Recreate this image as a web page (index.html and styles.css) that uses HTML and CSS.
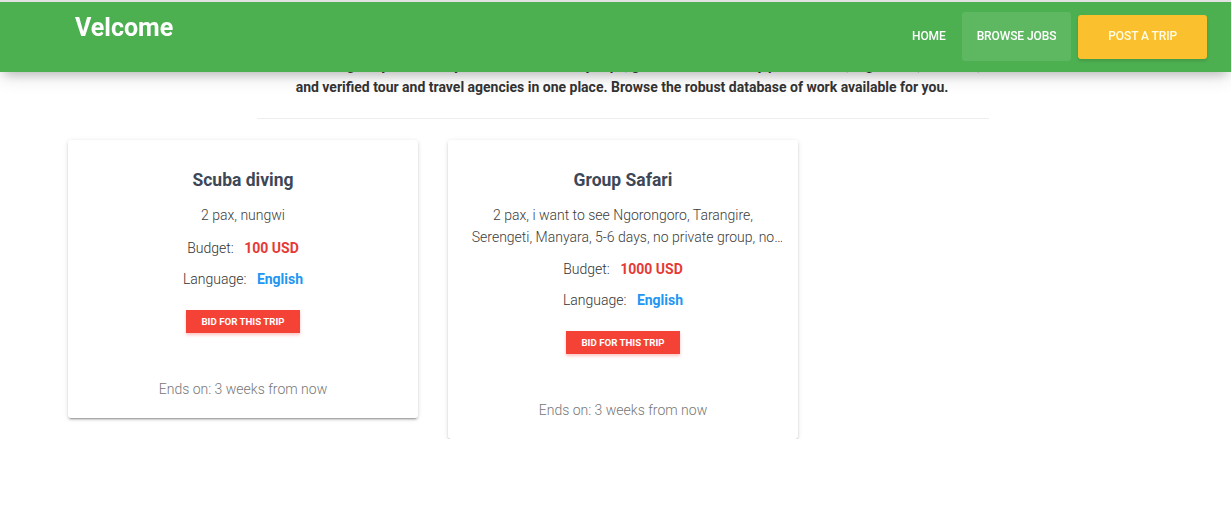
FILE: index.html
```html
<!DOCTYPE html>
<html lang="en">
<head>
<meta charset="utf-8">
<title>Velcome</title>
<link rel="stylesheet" href="styles.css">
</head>
<body>
<header class="topbar">
  <div class="brand">Velcome</div>
  <nav class="nav">
    <a class="nav-link" href="#">Home</a>
    <a class="nav-link nav-active" href="#">Browse Jobs</a>
    <a class="nav-cta" href="#">Post a Trip</a>
  </nav>
</header>
<main class="page">
  <p class="intro">Velcome brings to you a variety of safari and holiday trips, get offers from many professional, registered, licensed,<br>and verified tour and travel agencies in one place. Browse the robust database of work available for you.</p>
  <hr class="divider">
  <section class="cards">
    <article class="card">
      <h3 class="card-title">Scuba diving</h3>
      <p class="card-desc">2 pax, nungwi</p>
      <p class="card-row">Budget: <span class="budget">100 USD</span></p>
      <p class="card-row">Language: <span class="lang">English</span></p>
      <a class="bid" href="#">Bid for this trip</a>
      <p class="ends">Ends on: 3 weeks from now</p>
    </article>
    <article class="card">
      <h3 class="card-title">Group Safari</h3>
      <p class="card-desc">2 pax, i want to see Ngorongoro, Tarangire, Serengeti, Manyara, 5-6 days, no private group, no budget camping, mid range lodges preferred</p>
      <p class="card-row">Budget: <span class="budget">1000 USD</span></p>
      <p class="card-row">Language: <span class="lang">English</span></p>
      <a class="bid" href="#">Bid for this trip</a>
      <p class="ends">Ends on: 3 weeks from now</p>
    </article>
  </section>
</main>
</body>
</html>
```
FILE: styles.css
```css
html, body {
  margin: 0;
  padding: 0;
  background: #fff;
  font-family: Roboto, "Liberation Sans", Arial, sans-serif;
}

.topbar {
  position: fixed;
  top: 0;
  left: 0;
  right: 0;
  z-index: 10;
  height: 70px;
  border-top: 2px solid #e2e2e2;
  background: #4caf50;
  display: flex;
  align-items: center;
  justify-content: space-between;
  padding: 0 24px 0 75px;
  box-shadow: 0 4px 18px 0 rgba(0, 0, 0, 0.14), 0 7px 10px -5px rgba(0, 0, 0, 0.2);
}

.brand {
  align-self: flex-start;
  margin-top: 11px;
  color: #fff;
  font-size: 25px;
  line-height: 30px;
  font-weight: 700;
}

.nav {
  display: flex;
  align-items: center;
  margin-top: -1px;
}

.nav-link {
  display: block;
  padding: 0 15px;
  height: 49px;
  line-height: 49px;
  color: #fff;
  text-decoration: none;
  text-transform: uppercase;
  font-size: 12px;
  font-weight: 500;
  letter-spacing: -0.1px;
  border-radius: 3px;
}

.nav-active {
  margin-left: 1px;
  background: rgba(255, 255, 255, 0.1);
}

.nav-cta {
  display: block;
  margin-left: 7px;
  padding: 0 30px;
  height: 44px;
  line-height: 42px;
  background: #fbc02d;
  color: #fffde7;
  text-decoration: none;
  text-transform: uppercase;
  font-size: 12px;
  font-weight: 500;
  letter-spacing: -0.1px;
  border-radius: 3px;
  box-shadow: 0 2px 3px rgba(0, 0, 0, 0.12);
}

.page {
  padding-top: 54px;
}

.intro {
  width: 780px;
  margin: 0 0 20px 232px;
  text-align: center;
  font-size: 14px;
  line-height: 22px;
  font-weight: 700;
  color: #333;
  white-space: nowrap;
}

.divider {
  width: 732px;
  margin: 0 0 21px 257px;
  border: 0;
  border-top: 1px solid #eee;
}

.cards {
  display: flex;
  align-items: flex-start;
  gap: 30px;
  padding-left: 68px;
}

.card {
  width: 350px;
  box-sizing: border-box;
  padding: 28px 16px 18px;
  background: #fff;
  border-radius: 3px;
  box-shadow: 0 2px 2px 0 rgba(0, 0, 0, 0.14), 0 3px 1px -2px rgba(0, 0, 0, 0.2), 0 1px 5px 0 rgba(0, 0, 0, 0.12);
  text-align: center;
  display: flex;
  flex-direction: column;
  align-items: center;
}

.card-title {
  margin: 0 0 13px;
  font-size: 17.5px;
  line-height: 24px;
  font-weight: 700;
  color: #3c4858;
}

.card-desc {
  margin: 0 0 10px;
  font-size: 14px;
  line-height: 21.5px;
  font-weight: 300;
  color: #3c3c3c;
  display: -webkit-box;
  -webkit-line-clamp: 2;
  -webkit-box-orient: vertical;
  overflow: hidden;
}

.card-row {
  margin: 0 0 9px;
  font-size: 14px;
  line-height: 22px;
  font-weight: 300;
  color: #333;
}

.budget {
  margin-left: 7px;
  font-weight: 700;
  color: #e53935;
}

.lang {
  margin-left: 7px;
  font-weight: 700;
  color: #2196f3;
}

.bid {
  display: block;
  margin-top: 11px;
  padding: 0 15px;
  height: 23px;
  line-height: 23px;
  background: #f44336;
  color: #fff;
  text-decoration: none;
  text-transform: uppercase;
  font-size: 9.7px;
  font-weight: 700;
  box-shadow: 0 2px 3px rgba(244, 67, 54, 0.3);
}

.ends {
  margin: 45px 0 0;
  font-size: 14px;
  line-height: 22px;
  font-weight: 300;
  color: #777;
}
```
